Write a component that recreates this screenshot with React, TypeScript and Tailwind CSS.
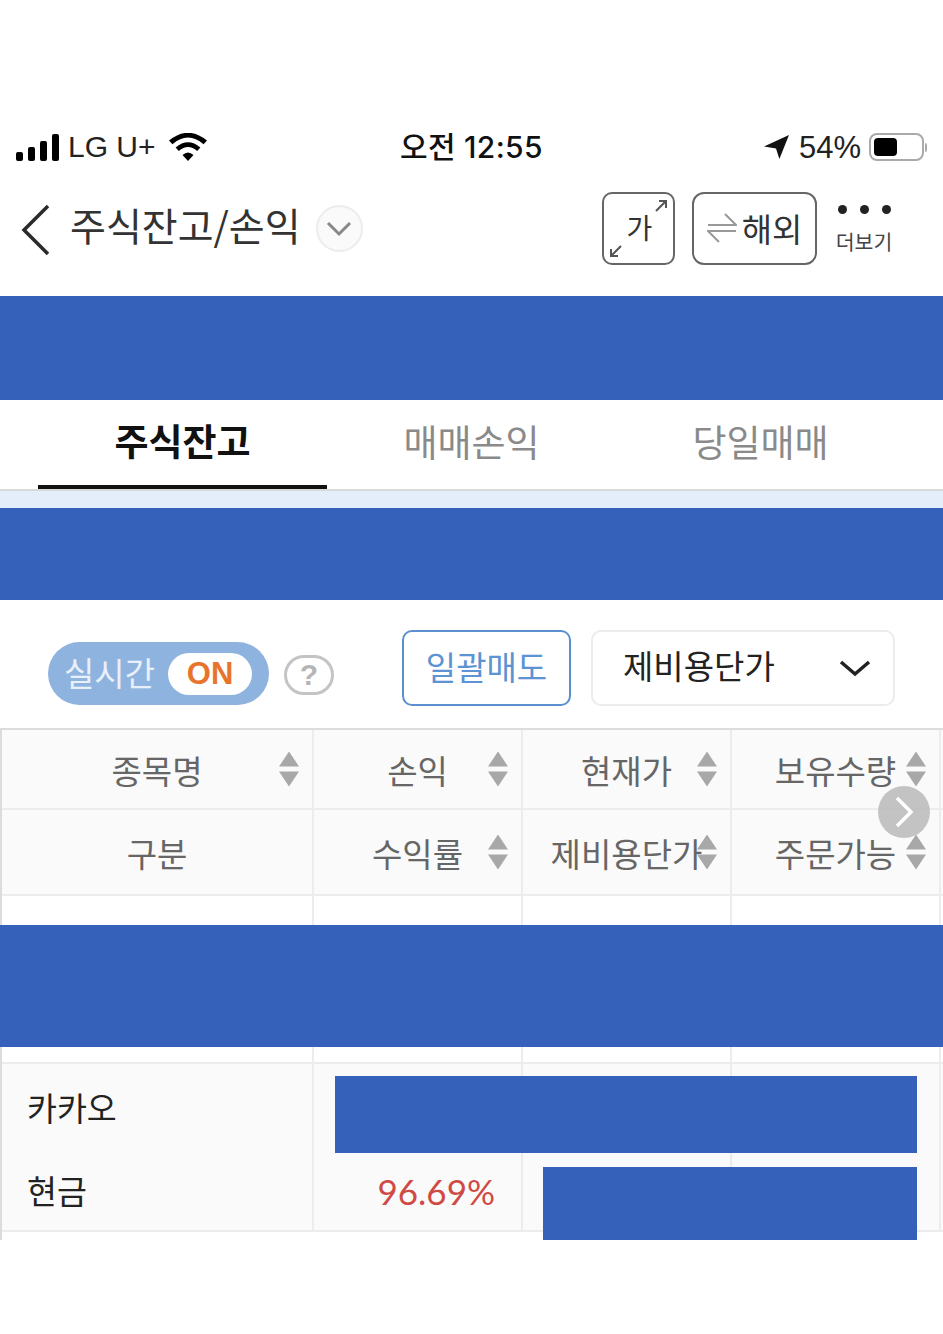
const kr = "font-['Noto_Sans_CJK_KR',sans-serif]";
const lat = "font-['Liberation_Sans','Noto_Sans_CJK_KR',sans-serif]";

function Redacted({ className = "" }: { className?: string }) {
  return <div className={`bg-[#3661bb] ${className}`} />;
}

function SortArrows() {
  return (
    <svg width="20" height="35" viewBox="0 0 20 35" className="absolute right-[13px] top-1/2 -translate-y-1/2" fill="#a8a8a8">
      <path d="M10 0 L20 15 H0 Z" />
      <path d="M0 20 H20 L10 35 Z" />
    </svg>
  );
}

function HeadCell({ label, sort = true, h }: { label: string; sort?: boolean; h: string }) {
  return (
    <div className={`relative flex items-center justify-center border-r-2 border-[#ececec] ${h}`}>
      <span className="text-[33px] leading-none text-[#666] whitespace-nowrap pt-[2px]">{label}</span>
      {sort && <SortArrows />}
    </div>
  );
}

function EmptyCell({ h }: { h: string }) {
  return <div className={`border-r-2 border-[#ececec] ${h}`} />;
}

export default function App() {
  const gridCols = "grid grid-cols-[312px_209px_209px_209px]";
  return (
    <div className={`w-[943px] h-[1334px] bg-white overflow-hidden ${kr}`}>
      {/* status bar */}
      <div className="pt-[129px] h-[176px] px-[16px]">
        <div className={`relative flex items-center justify-between h-[36px] ${lat}`}>
          <div className="flex items-center">
            <svg width="44" height="28" viewBox="0 0 44 28" fill="#000">
              <rect x="0" y="19" width="7" height="9" rx="2" />
              <rect x="12" y="14" width="7" height="14" rx="2" />
              <rect x="24" y="8" width="7" height="20" rx="2" />
              <rect x="36" y="1" width="7" height="27" rx="2" />
            </svg>
            <span className="ml-[8px] text-[30px] leading-none text-[#222]">LG U+</span>
            <svg width="38" height="28" viewBox="0 0 38 28" className="ml-[13px]" fill="#000">
              <path d="M19 28 L13.5 22 Q19 17 24.5 22 Z" />
              <path d="M9.8 18 L6.6 14.6 Q19 3.8 31.4 14.6 L28.2 18 Q19 10 9.8 18 Z" />
              <path d="M3.4 11.2 L0 7.6 Q19 -8 38 7.6 L34.6 11.2 Q19 -2 3.4 11.2 Z" />
            </svg>
          </div>
          <span className="absolute left-[384px] top-0 h-[36px] flex items-center text-[30px] leading-none font-medium tracking-[0.3px] text-[#111] whitespace-nowrap font-['Inter','Noto_Sans_CJK_KR',sans-serif]">오전 12:55</span>
          <div className="flex items-center">
            <svg width="25" height="25" viewBox="0 0 26 26" fill="#111">
              <path d="M26 0 L16 25 L12.5 14 L0 12 Z" />
            </svg>
            <span className="ml-[10px] text-[31px] leading-none text-[#222]">54%</span>
            <div className="ml-[8px] w-[55px] h-[28px] border-2 border-[#aaa] rounded-[8px] p-[3px]">
              <div className="w-[23px] h-full bg-black rounded-[4px]" />
            </div>
            <div className="ml-[1px] w-[2px] h-[9px] bg-[#aaa] rounded-r" />
          </div>
        </div>
      </div>

      {/* title bar */}
      <div className="h-[120px] flex items-start">
        <svg width="30" height="52" viewBox="0 0 30 52" className="ml-[21px] mt-[28px]" fill="none" stroke="#2a2a2a" strokeWidth="3.5">
          <path d="M27 2 L3 26 L27 50" />
        </svg>
        <span className="ml-[19px] mt-[25px] text-[39px] leading-[46px] text-[#333] whitespace-nowrap">주식잔고/손익</span>
        <div className="ml-[15px] mt-[29px] w-[47px] h-[47px] rounded-full border-2 border-[#ececec] bg-[#fafafa] flex items-center justify-center">
          <svg width="26" height="16" viewBox="0 0 26 16" fill="none" stroke="#888" strokeWidth="3">
            <path d="M2 2 L13 13 L24 2" />
          </svg>
        </div>
        <div className="ml-auto flex items-start pt-[16px]">
          <div className="relative w-[73px] h-[73px] border-2 border-[#666] rounded-[10px] flex items-center justify-center pb-[3px] pl-[2px] mr-[17px]">
            <span className="text-[28px] leading-none text-[#333]">가</span>
            <svg width="12" height="12" viewBox="0 0 12 12" className="absolute top-[6px] right-[6px]" fill="none" stroke="#555" strokeWidth="2">
              <path d="M1 11 L11 1 M4 1 H11 V8" />
            </svg>
            <svg width="12" height="12" viewBox="0 0 12 12" className="absolute bottom-[6px] left-[6px]" fill="none" stroke="#555" strokeWidth="2">
              <path d="M11 1 L1 11 M1 4 V11 H8" />
            </svg>
          </div>
          <div className="w-[125px] h-[73px] border-2 border-[#666] rounded-[12px] flex items-center justify-center pb-[1px] mr-[16px]">
            <svg width="30" height="32" viewBox="0 0 30 32" fill="none" stroke="#999" strokeWidth="2">
              <path d="M1 13 H29 L18 2" />
              <path d="M29 19 H1 L12 30" />
            </svg>
            <span className="ml-[5px] text-[33px] leading-none text-[#333] whitespace-nowrap">해외</span>
          </div>
          <div className="w-[62px] mr-[48px] flex flex-col items-center pt-[13px]">
            <div className="flex gap-[13px]">
              <div className="w-[9px] h-[9px] rounded-full bg-[#222]" />
              <div className="w-[9px] h-[9px] rounded-full bg-[#222]" />
              <div className="w-[9px] h-[9px] rounded-full bg-[#222]" />
            </div>
            <span className="mt-[15px] text-[20.5px] leading-[24px] text-[#444] whitespace-nowrap">더보기</span>
          </div>
        </div>
      </div>

      <Redacted className="h-[104px]" />

      {/* tabs */}
      <div className="h-[91px] flex px-[38px] border-b-2 border-[#d9d9d9]">
        <div className="w-[289px] h-[89px] -mb-[2px] flex items-center justify-center border-b-[4px] border-[#111] pb-[4px]">
          <span className="text-[37px] leading-none font-bold text-[#111] whitespace-nowrap">주식잔고</span>
        </div>
        <div className="w-[289px] h-[89px] flex items-center justify-center pb-[7px]">
          <span className="text-[37px] leading-none text-[#8a8a8a] whitespace-nowrap">매매손익</span>
        </div>
        <div className="w-[289px] h-[89px] flex items-center justify-center pb-[7px]">
          <span className="text-[37px] leading-none text-[#8a8a8a] whitespace-nowrap">당일매매</span>
        </div>
      </div>
      <div className="h-[17px] bg-[#e3eefa]" />

      <Redacted className="h-[92px]" />

      {/* controls */}
      <div className="h-[128px] flex items-start pt-[30px]">
        <div className="ml-[48px] mt-[12px] w-[221px] h-[63px] rounded-full bg-[#8fb3df] flex items-center pl-[16px]">
          <span className="text-[33px] leading-none text-[#e8f0fa] whitespace-nowrap pb-[2px]">실시간</span>
          <div className={`ml-[13px] w-[84px] h-[42px] rounded-full bg-white flex items-center justify-center ${lat}`}>
            <span className="text-[31px] leading-none font-bold text-[#e8742c]">ON</span>
          </div>
        </div>
        <div className={`ml-[15px] mt-[25px] w-[50px] h-[40px] rounded-full border-[3px] border-[#c4c4c4] flex items-center justify-center ${lat}`}>
          <span className="text-[30px] leading-none font-bold text-[#b5b5b5]">?</span>
        </div>
        <div className="ml-[68px] w-[169px] h-[76px] rounded-[10px] border-2 border-[#5b8fcf] flex items-center justify-center pb-[4px]">
          <span className="text-[33px] leading-none text-[#5b93d3] whitespace-nowrap">일괄매도</span>
        </div>
        <div className="ml-[20px] w-[304px] h-[76px] rounded-[10px] border-2 border-[#ececec] flex items-center pl-[30px] pr-[22px] justify-between">
          <span className="text-[33px] leading-none text-[#222] whitespace-nowrap pb-[5px]">제비용단가</span>
          <svg width="32" height="18" viewBox="0 0 32 18" fill="none" stroke="#222" strokeWidth="3.5">
            <path d="M2 3 L16 15 L30 3" />
          </svg>
        </div>
      </div>

      {/* table */}
      <div className="relative w-[943px] h-[512px] border-t-2 border-l-2 border-[#dcdcdc]">
        <div className={`${gridCols} bg-[#fafafa] border-b-2 border-[#ececec]`}>
          <HeadCell label="종목명" h="h-[78px]" />
          <HeadCell label="손익" h="h-[78px]" />
          <HeadCell label="현재가" h="h-[78px]" />
          <HeadCell label="보유수량" h="h-[78px]" />
        </div>
        <div className={`${gridCols} bg-[#fafafa] border-b-2 border-[#ececec]`}>
          <HeadCell label="구분" sort={false} h="h-[84px]" />
          <HeadCell label="수익률" h="h-[84px]" />
          <HeadCell label="제비용단가" h="h-[84px]" />
          <HeadCell label="주문가능" h="h-[84px]" />
        </div>
        <div className={gridCols}>
          <EmptyCell h="h-[29px]" />
          <EmptyCell h="h-[29px]" />
          <EmptyCell h="h-[29px]" />
          <EmptyCell h="h-[29px]" />
        </div>
        <Redacted className="h-[122px] -ml-[2px]" />
        <div className={`${gridCols} border-b-2 border-[#ececec]`}>
          <EmptyCell h="h-[15px]" />
          <EmptyCell h="h-[15px]" />
          <EmptyCell h="h-[15px]" />
          <EmptyCell h="h-[15px]" />
        </div>
        <div className={`relative ${gridCols} bg-[#fafafa] border-b-2 border-[#ececec] h-[168px]`}>
          <div className="border-r-2 border-[#ececec] flex flex-col pl-[25px] text-[#222]">
            <span className="mt-[23px] text-[32.5px] leading-[40px] whitespace-nowrap">카카오</span>
            <span className="mt-[43px] text-[32.5px] leading-[40px] whitespace-nowrap">현금</span>
          </div>
          <div className="border-r-2 border-[#ececec] flex items-end justify-end pr-[26px] pb-[19px]">
            <span className="text-[35px] leading-[40px] text-[#cf4a45] whitespace-nowrap font-['Lato',sans-serif]">96.69%</span>
          </div>
          <div className="border-r-2 border-[#ececec]" />
          <div className="border-r-2 border-[#ececec]" />
          <Redacted className="absolute left-[333px] top-[12px] w-[582px] h-[77px]" />
          <Redacted className="absolute left-[541px] top-[103px] w-[374px] h-[73px]" />
        </div>
        <div className="absolute left-[876px] top-[56px] w-[52px] h-[52px] rounded-full bg-[#bdbdbd]/90 flex items-center justify-center">
          <svg width="20" height="32" viewBox="0 0 20 32" fill="none" stroke="#fff" strokeWidth="3.5">
            <path d="M3 2 L17 16 L3 30" />
          </svg>
        </div>
      </div>
    </div>
  );
}
